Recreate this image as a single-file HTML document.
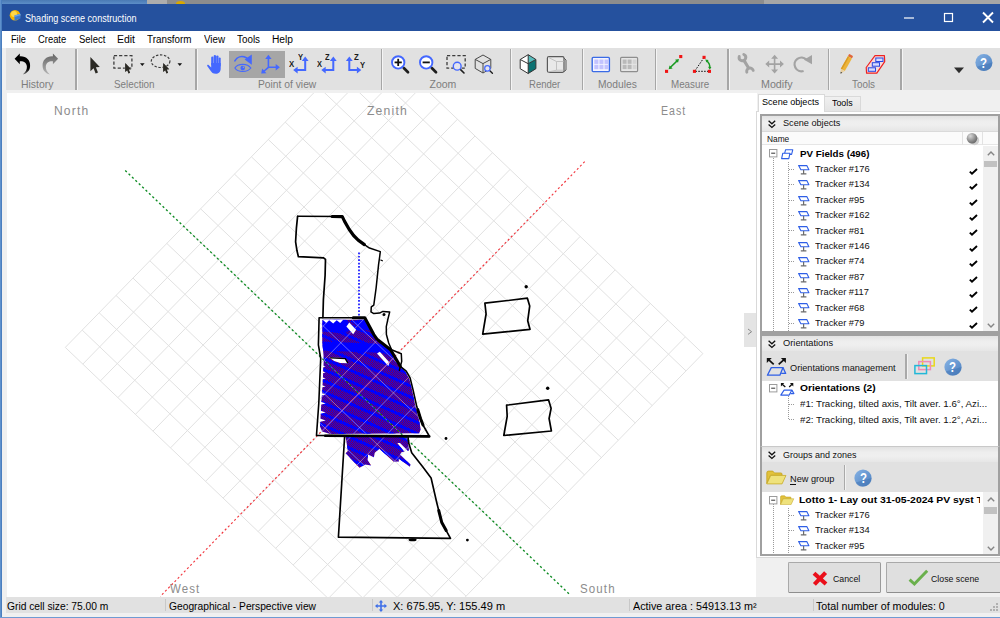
<!DOCTYPE html>
<html>
<head>
<meta charset="utf-8">
<title>Shading scene construction</title>
<style>
*{box-sizing:border-box;margin:0;padding:0}
html,body{width:1000px;height:618px;overflow:hidden;background:#f0f0f0;font-family:"Liberation Sans",sans-serif;}
#root{position:relative;width:1000px;height:618px;overflow:hidden;background:#f0f0f0}
.a{position:absolute}
.t{position:absolute;white-space:nowrap;line-height:1;transform-origin:0 0}
svg{position:absolute;overflow:hidden}
</style>
</head>
<body>
<div id="root">
<div class="a" style="left:0px;top:0px;width:147.4px;height:4px;background:linear-gradient(180deg,#4a7ab4,#5c8ec8);"></div>
<div class="a" style="left:147.4px;top:0px;width:19.6px;height:4px;background:#adadad;"></div>
<div class="a" style="left:167px;top:0px;width:597px;height:4px;background:#8d8d8d;"></div>
<div class="a" style="left:176px;top:0.6px;width:9px;height:5px;background:#d9a800;border-radius:50% 50% 0 0"></div>
<div class="a" style="left:764px;top:0px;width:236px;height:4px;background:#a6a6a6;"></div>
<div class="a" style="left:1px;top:4px;width:999px;height:27px;background:#25519e;"></div>
<svg style="left:9px;top:9px" width="13" height="13" viewBox="0 0 13 13"><circle cx="6" cy="6.3" r="5.3" fill="#f7b500"/><circle cx="5" cy="5" r="3" fill="#ffd84a"/><path d="M5.5 6.5 L11.5 4.8 L11.5 9.5 L5.5 11.8 Z" fill="#3c7bd0"/><path d="M5.5 6.5 L11.5 4.8 L11.5 6.2 L5.5 8 Z" fill="#6aa3e8"/></svg>
<div class="t" style="left:24.50px;top:13.64px;font-size:10px;color:#fff;transform:scaleX(0.9075);">Shading scene construction</div>
<svg style="left:896px;top:4px" width="104" height="27" viewBox="0 0 104 27"><path d="M8 14 H18" stroke="#fff" stroke-width="1.2"/><rect x="48.5" y="9.5" width="8" height="8" fill="none" stroke="#fff" stroke-width="1.2"/><path d="M87 8.5 L97 18.5 M97 8.5 L87 18.5" stroke="#fff" stroke-width="1.9"/></svg>
<div class="a" style="left:2px;top:31px;width:998px;height:17px;background:#fff;"></div>
<div class="t" style="left:10.80px;top:34.83px;font-size:10px;color:#000;transform:scaleX(0.9185);">File</div>
<div class="t" style="left:38.20px;top:34.83px;font-size:10px;color:#000;transform:scaleX(0.9395);">Create</div>
<div class="t" style="left:78.60px;top:34.83px;font-size:10px;color:#000;transform:scaleX(0.9499);">Select</div>
<div class="t" style="left:117.00px;top:34.83px;font-size:10px;color:#000;transform:scaleX(1.0446);">Edit</div>
<div class="t" style="left:146.50px;top:34.83px;font-size:10px;color:#000;transform:scaleX(0.9847);">Transform</div>
<div class="t" style="left:203.50px;top:34.83px;font-size:10px;color:#000;transform:scaleX(0.9770);">View</div>
<div class="t" style="left:236.50px;top:34.83px;font-size:10px;color:#000;transform:scaleX(0.9852);">Tools</div>
<div class="t" style="left:271.50px;top:34.83px;font-size:10px;color:#000;transform:scaleX(1.0210);">Help</div>
<div class="a" style="left:6px;top:48px;width:994px;height:42.4px;background:#e1e1e1;"></div>
<div class="a" style="left:1.8px;top:48px;width:4.3px;height:570px;background:#f0f0f0;"></div>
<div class="a" style="left:6px;top:597px;width:994px;height:16px;background:#e1e1e1;"></div>
<div class="t" style="left:7.20px;top:601.53px;font-size:10px;color:#000;transform:scaleX(1.0250);">Grid cell size: 75.00 m</div>
<div class="t" style="left:168.50px;top:601.53px;font-size:10px;color:#000;transform:scaleX(1.0251);">Geographical - Perspective view</div>
<div class="t" style="left:392.80px;top:601.53px;font-size:10px;color:#000;transform:scaleX(1.1038);">X: 675.95, Y: 155.49 m</div>
<div class="t" style="left:632.50px;top:601.53px;font-size:10px;color:#000;transform:scaleX(1.0785);">Active area : 54913.13 m²</div>
<div class="t" style="left:816.00px;top:601.53px;font-size:10px;color:#000;transform:scaleX(1.0678);">Total number of modules: 0</div>
<div class="a" style="left:165px;top:599px;width:1px;height:12px;background:#c8c8c8;"></div>
<div class="a" style="left:371.5px;top:599px;width:1px;height:12px;background:#c8c8c8;"></div>
<div class="a" style="left:629px;top:599px;width:1px;height:12px;background:#c8c8c8;"></div>
<div class="a" style="left:812.5px;top:599px;width:1px;height:12px;background:#c8c8c8;"></div>
<svg style="left:375px;top:600px" width="12" height="12" viewBox="0 0 12 12"><path d="M6 0 L8.2 2.6 H6.8 V5.2 H9.4 V3.8 L12 6 L9.4 8.2 V6.8 H6.8 V9.4 H8.2 L6 12 L3.8 9.4 H5.2 V6.8 H2.6 V8.2 L0 6 L2.6 3.8 V5.2 H5.2 V2.6 H3.8 Z" fill="#3f6fe8"/></svg>
<svg style="left:990px;top:603px" width="9" height="9" viewBox="0 0 9 9"><g fill="#b0b0b0"><rect x="6" y="0" width="2" height="2"/><rect x="3" y="3" width="2" height="2"/><rect x="6" y="3" width="2" height="2"/><rect x="0" y="6" width="2" height="2"/><rect x="3" y="6" width="2" height="2"/><rect x="6" y="6" width="2" height="2"/></g></svg>
<div class="a" style="left:6.8px;top:92.5px;width:750.7px;height:504.5px;background:#fff;"></div>
<svg style="left:6.8px;top:92.5px" width="750.7" height="504.5" viewBox="0 0 750.7 504.5">
<path d="M58.3 254.4L362.8 -57.5M75.8 271.1L380.3 -40.8M93.4 287.9L397.9 -24.0M110.9 304.6L415.4 -7.3M128.4 321.4L432.9 9.5M146.0 338.1L450.5 26.2M163.5 354.9L468.0 43.0M181.0 371.6L485.5 59.7M198.6 388.3L503.1 76.4M216.1 405.1L520.6 93.2M233.6 421.8L538.1 109.9M251.1 438.6L555.6 126.7M268.7 455.3L573.2 143.4M286.2 472.0L590.7 160.1M303.7 488.8L608.2 176.9M321.3 505.5L625.8 193.6M338.8 522.3L643.3 210.4M356.3 539.0L660.8 227.1M373.9 555.8L678.4 243.9M391.4 572.5L695.9 260.6M58.3 254.4L391.4 572.5M75.2 237.1L408.3 555.2M92.1 219.7L425.2 537.8M109.0 202.4L442.1 520.5M126.0 185.1L459.1 503.2M142.9 167.8L476.0 485.9M159.8 150.4L492.9 468.5M176.7 133.1L509.8 451.2M193.6 115.8L526.7 433.9M210.5 98.4L543.7 416.6M227.5 81.1L560.6 399.2M244.4 63.8L577.5 381.9M261.3 46.5L594.4 364.6M278.2 29.1L611.3 347.2M295.1 11.8L628.2 329.9M312.1 -5.5L645.2 312.6M329.0 -22.8L662.1 295.3M345.9 -40.2L679.0 277.9M362.8 -57.5L695.9 260.6" stroke="#e1e1e1" stroke-width="1" fill="none"/>
<path d="M118.2 77.5L563.4 502.1" stroke="#0f8c24" stroke-width="1.35" stroke-dasharray="2.2 2.5" fill="none"/>
<path d="M577.7 68.7L153.2 503.5" stroke="#f2363e" stroke-width="1.15" stroke-dasharray="2.1 2.4" fill="none"/>
<path d="M352.0 159.5V299.5" stroke="#1414ff" stroke-width="1.7" stroke-dasharray="1.7 1.7" fill="none"/>
<defs><pattern id="hp" width="2" height="2" patternUnits="userSpaceOnUse" patternTransform="translate(0.00 0.00)"><rect width="2" height="2" fill="#0000ff"/><rect x="0" y="0" width="1" height="1" fill="#880040" shape-rendering="crispEdges"/><rect x="1" y="1" width="1" height="1" fill="#880040" shape-rendering="crispEdges"/></pattern><pattern id="bp" width="40" height="10.2" patternUnits="userSpaceOnUse" patternTransform="rotate(24)"><rect y="0" width="40" height="2.9" fill="#0000ff"/></pattern><clipPath id="hc"><polygon points="315.5,226.8 358.0,226.8 361.7,234.5 370.2,247.0 383.2,258.0 392.7,273.5 398.2,278.5 402.2,285.5 405.2,297.5 408.7,314.5 412.2,327.5 413.7,336.5 412.2,340.3 323.2,340.9 315.2,338.5 313.0,333.5 314.2,312.5 315.8,287.5 316.8,265.5 315.2,247.5"/><polygon points="338.6,344.0 400.2,344.0 402.0,357.1 401.1,358.0 393.0,349.9 390.3,349.9 397.5,358.9 394.8,358.9 393.0,361.6 403.4,371.5 402.9,373.8 391.2,365.2 392.1,368.4 386.7,368.8 372.3,355.8 367.8,359.8 366.9,364.3 361.1,361.6 360.6,367.0 364.2,372.4 357.9,371.5 355.2,373.3 352.5,374.7 338.6,360.3 340.8,358.0 339.9,351.7"/></clipPath></defs>
<g clip-path="url(#hc)"><rect x="300" y="215" width="130" height="170" fill="url(#hp)"/><rect x="300" y="215" width="130" height="170" fill="url(#bp)"/><polygon points="315.2,248.5 376.2,251.0 385.2,259.5 377.2,260.0 315.2,257.5" fill="#0000ff"/><polygon points="315.2,226.5 339.2,226.5 345.2,234.5 338.2,240.5 315.2,238.5" fill="#0000ff"/><polygon points="343.2,228.0 357.2,227.0 365.2,237.5 355.2,236.5" fill="#0000ff"/></g>
<polygon points="339.4,233.4 342.3,229.4 349.1,236.8 346.2,241.3" fill="#fff"/><polygon points="370.0,260.5 372.8,258.8 382.5,269.6 381.3,273.0" fill="#fff"/><polygon points="322.2,264.5 337.7,265.1 340.8,270.3 333.2,270.1 327.2,268.0" fill="#fff"/><polygon points="315.7,226.8 319.2,230.0 322.2,227.3 326.2,230.5 329.7,227.3 333.2,230.0 336.2,226.8" fill="#fff"/><polygon points="312.2,271.3 318.7,273.5 312.2,275.1" fill="#fff"/><polygon points="312.2,277.3 318.7,279.5 312.2,281.1" fill="#fff"/><polygon points="312.2,283.3 318.7,285.5 312.2,287.1" fill="#fff"/><polygon points="312.2,291.3 318.7,293.5 312.2,295.1" fill="#fff"/><polygon points="312.2,299.3 318.7,301.5 312.2,303.1" fill="#fff"/><polygon points="312.2,308.3 318.7,310.5 312.2,312.1" fill="#fff"/><polygon points="312.2,317.3 318.7,319.5 312.2,321.1" fill="#fff"/><polygon points="312.2,325.3 318.7,327.5 312.2,329.1" fill="#fff"/>
<g clip-path="url(#hc)"><path d="M58.3 254.4L362.8 -57.5M75.8 271.1L380.3 -40.8M93.4 287.9L397.9 -24.0M110.9 304.6L415.4 -7.3M128.4 321.4L432.9 9.5M146.0 338.1L450.5 26.2M163.5 354.9L468.0 43.0M181.0 371.6L485.5 59.7M198.6 388.3L503.1 76.4M216.1 405.1L520.6 93.2M233.6 421.8L538.1 109.9M251.1 438.6L555.6 126.7M268.7 455.3L573.2 143.4M286.2 472.0L590.7 160.1M303.7 488.8L608.2 176.9M321.3 505.5L625.8 193.6M338.8 522.3L643.3 210.4M356.3 539.0L660.8 227.1M373.9 555.8L678.4 243.9M391.4 572.5L695.9 260.6M58.3 254.4L391.4 572.5M75.2 237.1L408.3 555.2M92.1 219.7L425.2 537.8M109.0 202.4L442.1 520.5M126.0 185.1L459.1 503.2M142.9 167.8L476.0 485.9M159.8 150.4L492.9 468.5M176.7 133.1L509.8 451.2M193.6 115.8L526.7 433.9M210.5 98.4L543.7 416.6M227.5 81.1L560.6 399.2M244.4 63.8L577.5 381.9M261.3 46.5L594.4 364.6M278.2 29.1L611.3 347.2M295.1 11.8L628.2 329.9M312.1 -5.5L645.2 312.6M329.0 -22.8L662.1 295.3M345.9 -40.2L679.0 277.9M362.8 -57.5L695.9 260.6" stroke="#c9c4ff" stroke-width="0.7" opacity="0.7" fill="none"/><path d="M577.7 68.7L153.2 503.5" stroke="#e05aa0" stroke-width="0.8" opacity="0.75" fill="none"/><path d="M118.2 77.5L563.4 502.1" stroke="#0b6a2a" stroke-width="1.3" stroke-dasharray="2.2 2.5" fill="none"/></g>
<polyline points="290.6,123.3 335.3,123.6 337.6,128.4 342.1,136.3 346.6,142.5 351.2,147.1 357.4,151.6 362.5,155.0 373.3,158.6 372.7,163.5 371.6,171.4 369.1,195.2 366.8,212.2 364.3,213.9 364.0,218.9 366.8,220.6 372.5,220.1 375.9,218.4 382.7,218.9 381.0,225.7 379.3,233.7 379.4,241.5 381.7,250.0 384.6,256.8 394.3,260.7 394.7,268.4 392.4,277.2" stroke="#000" fill="none" stroke-linejoin="round" stroke-linecap="round" stroke-width="1.5"/><polyline points="290.6,123.3 289.4,135.2 288.6,148.8 290.0,157.8 291.4,163.7 316.6,164.8 318.5,166.3 318.1,182.5 316.4,206.5 315.9,224.6" stroke="#000" fill="none" stroke-linejoin="round" stroke-linecap="round" stroke-width="1.7"/><polyline points="325.2,123.5 335.3,123.6 337.6,128.4 342.1,136.3 346.6,142.5 351.2,147.1 357.4,151.6" stroke="#000" fill="none" stroke-linejoin="round" stroke-linecap="round" stroke-width="3.2"/><circle cx="377.0" cy="221.5" r="1.5" fill="#000"/><path d="M373.8 167.0l1.6 0.8" stroke="#000" fill="none" stroke-linejoin="round" stroke-linecap="round" stroke-width="1.2"/><polygon points="312.1,224.8 357.8,224.8 366.8,241.6 370.0,246.1 383.6,256.8 393.3,273.3 399.2,278.1 403.1,284.9 406.0,296.6 409.9,314.1 415.7,331.5 422.5,343.5 309.5,342.4 311.8,310.2 313.7,265.5 311.4,251.9 312.1,224.8" stroke="#000" fill="none" stroke-linejoin="round" stroke-linecap="round" stroke-width="1.6"/><polyline points="346.2,224.7 357.8,224.8 366.8,241.6 370.0,246.1 383.6,256.8 393.3,273.3" stroke="#000" fill="none" stroke-linejoin="round" stroke-linecap="round" stroke-width="3.1"/><polyline points="410.7,316.5 413.5,325.5 416.0,332.0" stroke="#000" fill="none" stroke-linejoin="round" stroke-linecap="round" stroke-width="3"/><polyline points="318.2,342.7 422.2,343.4" stroke="#000" fill="none" stroke-linejoin="round" stroke-linecap="round" stroke-width="2.6"/><polyline points="323.6,264.9 338.3,265.6 340.6,269.6" stroke="#000" fill="none" stroke-linejoin="round" stroke-linecap="round" stroke-width="1.4"/><polyline points="337.6,343.8 334.7,390.8 331.4,444.2 443.5,445.4 434.8,429.6 429.9,410.2 424.1,385.0 415.3,373.3 404.7,359.7 401.7,350.0 401.0,343.5" stroke="#000" fill="none" stroke-linejoin="round" stroke-linecap="round" stroke-width="1.65"/><polyline points="431.7,417.5 434.8,429.6 439.2,437.5" stroke="#000" fill="none" stroke-linejoin="round" stroke-linecap="round" stroke-width="3"/><ellipse cx="405.6" cy="446.7" rx="4" ry="1.5" fill="#000"/><polygon points="477.9,210.2 520.4,205.2 522.7,213.1 520.7,227.8 523.0,236.3 475.7,241.2 479.1,221.0" stroke="#000" fill="none" stroke-linejoin="round" stroke-linecap="round" stroke-width="1.7"/><polygon points="499.6,312.2 541.5,306.8 544.1,315.3 542.1,325.5 544.4,338.0 496.8,342.5 500.2,323.3" stroke="#000" fill="none" stroke-linejoin="round" stroke-linecap="round" stroke-width="1.7"/><circle cx="519.2" cy="193.8" r="1.7" fill="#000"/><circle cx="540.7" cy="295.3" r="1.7" fill="#000"/><circle cx="439.0" cy="345.5" r="1.4" fill="#000"/><circle cx="460.4" cy="447.1" r="1.4" fill="#000"/>
</svg>
<div class="t" style="left:54.00px;top:104.52px;font-size:12.5px;color:#8c8c8c;letter-spacing:1.2px;transform:scaleX(0.9653);">North</div>
<div class="t" style="left:366.50px;top:104.52px;font-size:12.5px;color:#8c8c8c;letter-spacing:1.2px;transform:scaleX(0.9752);">Zenith</div>
<div class="t" style="left:660.70px;top:104.52px;font-size:12.5px;color:#8c8c8c;letter-spacing:1.2px;transform:scaleX(0.8486);">East</div>
<div class="t" style="left:169.60px;top:582.82px;font-size:12.5px;color:#8c8c8c;letter-spacing:1.2px;transform:scaleX(0.9199);">West</div>
<div class="t" style="left:580.00px;top:582.82px;font-size:12.5px;color:#8c8c8c;letter-spacing:1.2px;transform:scaleX(0.9233);">South</div>
<div class="a" style="left:744px;top:312.7px;width:12px;height:34.4px;background:#e4e4e4;"></div>
<svg style="left:747px;top:328px" width="6" height="8" viewBox="0 0 6 8"><path d="M1 1 L4.6 3.7 L1 6.4" stroke="#8a8a8a" stroke-width="1" fill="none"/></svg>
<div class="a" style="left:229px;top:50.5px;width:56px;height:27px;background:#a6a6a6;"></div>
<div class="a" style="left:75.3px;top:49px;width:1.3px;height:40.8px;background:#a6a6a6;"></div>
<div class="a" style="left:76.6px;top:49px;width:0.9px;height:40.8px;background:#f4f4f4;"></div>
<div class="a" style="left:195.3px;top:49px;width:1.3px;height:40.8px;background:#a6a6a6;"></div>
<div class="a" style="left:196.6px;top:49px;width:0.9px;height:40.8px;background:#f4f4f4;"></div>
<div class="a" style="left:380.8px;top:49px;width:1.3px;height:40.8px;background:#a6a6a6;"></div>
<div class="a" style="left:382.1px;top:49px;width:0.9px;height:40.8px;background:#f4f4f4;"></div>
<div class="a" style="left:509.8px;top:49px;width:1.3px;height:40.8px;background:#a6a6a6;"></div>
<div class="a" style="left:511.1px;top:49px;width:0.9px;height:40.8px;background:#f4f4f4;"></div>
<div class="a" style="left:581.8px;top:49px;width:1.3px;height:40.8px;background:#a6a6a6;"></div>
<div class="a" style="left:583.1px;top:49px;width:0.9px;height:40.8px;background:#f4f4f4;"></div>
<div class="a" style="left:654.8px;top:49px;width:1.3px;height:40.8px;background:#a6a6a6;"></div>
<div class="a" style="left:656.1px;top:49px;width:0.9px;height:40.8px;background:#f4f4f4;"></div>
<div class="a" style="left:727.3px;top:49px;width:1.3px;height:40.8px;background:#a6a6a6;"></div>
<div class="a" style="left:728.6px;top:49px;width:0.9px;height:40.8px;background:#f4f4f4;"></div>
<div class="a" style="left:827.8px;top:49px;width:1.3px;height:40.8px;background:#a6a6a6;"></div>
<div class="a" style="left:829.1px;top:49px;width:0.9px;height:40.8px;background:#f4f4f4;"></div>
<div class="a" style="left:900.3px;top:49px;width:1.3px;height:40.8px;background:#a6a6a6;"></div>
<div class="a" style="left:901.6px;top:49px;width:0.9px;height:40.8px;background:#f4f4f4;"></div>
<div class="t" style="left:21.40px;top:79.41px;font-size:10.5px;color:#7d7d7d;transform:scaleX(0.9917);">History</div>
<div class="t" style="left:113.70px;top:79.41px;font-size:10.5px;color:#7d7d7d;transform:scaleX(0.9399);">Selection</div>
<div class="t" style="left:257.50px;top:79.41px;font-size:10.5px;color:#7d7d7d;transform:scaleX(0.9793);">Point of view</div>
<div class="t" style="left:429.50px;top:79.41px;font-size:10.5px;color:#7d7d7d;">Zoom</div>
<div class="t" style="left:528.70px;top:79.41px;font-size:10.5px;color:#7d7d7d;transform:scaleX(0.9088);">Render</div>
<div class="t" style="left:597.50px;top:79.41px;font-size:10.5px;color:#7d7d7d;transform:scaleX(0.9776);">Modules</div>
<div class="t" style="left:670.70px;top:79.41px;font-size:10.5px;color:#7d7d7d;transform:scaleX(0.9326);">Measure</div>
<div class="t" style="left:760.50px;top:79.41px;font-size:10.5px;color:#7d7d7d;transform:scaleX(1.0185);">Modify</div>
<div class="t" style="left:852.00px;top:79.41px;font-size:10.5px;color:#7d7d7d;transform:scaleX(0.9383);">Tools</div>
<svg style="left:0px;top:48px" width="1000" height="43" viewBox="0 48 1000 43">
<defs><linearGradient id="rg" x1="0" y1="0" x2="0" y2="1"><stop offset="0" stop-color="#636363"/><stop offset="1" stop-color="#b4b4b4"/></linearGradient><linearGradient id="ug" x1="0" y1="0" x2="0" y2="1"><stop offset="0.75" stop-color="#000"/><stop offset="1" stop-color="#777"/></linearGradient><linearGradient id="hg" x1="0" y1="0" x2="1" y2="1"><stop offset="0" stop-color="#86b2e4"/><stop offset="1" stop-color="#4c80c0"/></linearGradient></defs>
<path d="M14.6 58.8 L19.8 53.5 L19.8 56.4 C26 56 30.4 60 30.1 66 C29.9 70.6 27 73.6 22.8 74.4 C25.8 72 27 69.5 26.9 66.5 C26.6 62.6 23.6 61 19.8 61.3 L19.8 64.2 Z" fill="url(#ug)"/>
<g transform="translate(72.7 0) scale(-1 1)"><path d="M14.6 58.8 L19.8 53.5 L19.8 56.4 C26 56 30.4 60 30.1 66 C29.9 70.6 27 73.6 22.8 74.4 C25.8 72 27 69.5 26.9 66.5 C26.6 62.6 23.6 61 19.8 61.3 L19.8 64.2 Z" fill="url(#rg)"/></g>
<path transform="translate(90.4 56.9)" d="M0 0 L0 14.3 L3.2 11.3 L5.2 16.5 L7.6 15.5 L5.5 10.4 L9.4 10.1 Z" fill="#2b2a25"/>
<rect x="113.9" y="55.6" width="18" height="12.6" fill="none" stroke="#3c3c3c" stroke-width="1.3" stroke-dasharray="3.2 2"/><path transform="translate(125.2 62.9) scale(0.64)" d="M0 0 L0 14.3 L3.2 11.3 L5.2 16.5 L7.6 15.5 L5.5 10.4 L9.4 10.1 Z" fill="#2b2a25" stroke="#e1e1e1" stroke-width="0.8"/><path transform="translate(125.2 62.9) scale(0.64)" d="M0 0 L0 14.3 L3.2 11.3 L5.2 16.5 L7.6 15.5 L5.5 10.4 L9.4 10.1 Z" fill="#2b2a25"/><path d="M140 63.3 h4.6 l-2.3 2.6 Z" fill="#111"/>
<ellipse cx="160.6" cy="61.2" rx="9.3" ry="6.3" fill="none" stroke="#3c3c3c" stroke-width="1.2" stroke-dasharray="2.4 1.6"/><path transform="translate(163.2 62.9) scale(0.64)" d="M0 0 L0 14.3 L3.2 11.3 L5.2 16.5 L7.6 15.5 L5.5 10.4 L9.4 10.1 Z" fill="#2b2a25" stroke="#e1e1e1" stroke-width="0.8"/><path transform="translate(163.2 62.9) scale(0.64)" d="M0 0 L0 14.3 L3.2 11.3 L5.2 16.5 L7.6 15.5 L5.5 10.4 L9.4 10.1 Z" fill="#2b2a25"/><path d="M177.5 63.3 h4.6 l-2.3 2.6 Z" fill="#111"/>
<g fill="#4468ff"><rect x="211.2" y="56.6" width="2.3" height="9" rx="1.1"/><rect x="213.7" y="55" width="2.3" height="10" rx="1.1"/><rect x="216.2" y="55.4" width="2.3" height="10" rx="1.1"/><rect x="218.6" y="57.6" width="2.1" height="9" rx="1"/><path d="M211.2 63 H220.7 V68.5 C220.7 72 218.5 73.8 215.8 73.8 C213 73.8 211.6 72.5 210.4 70.5 L207.2 66 C206.8 65.2 207.8 64.4 208.6 65 L211.2 67.4 Z"/></g>
<path d="M234.9 60.8 C237 57 241.5 55.3 246.8 58" fill="none" stroke="#4468ff" stroke-width="1.7" stroke-linecap="round"/><path d="M251.8 54.6 L251.8 64.8 L244.6 59.4 Z" fill="#4468ff"/><path d="M234.9 68 C238 63.2 247.5 63.2 250.8 68 C247.5 72.6 238 72.6 234.9 68 Z" fill="none" stroke="#4468ff" stroke-width="1.2"/><circle cx="242.7" cy="68" r="2.3" fill="#4468ff"/><circle cx="243.4" cy="67.3" r="0.7" fill="#a6a6a6"/>
<g stroke="#4468ff" stroke-width="1.6" fill="none"><path d="M268.4 67.3 V58 M268.4 67.3 H276.5 M268.4 67.3 L263.6 71.5"/></g><g fill="#4468ff"><path d="M268.4 54.8 L271.6 59 H265.2 Z"/><path d="M279.9 67.3 L275.7 70.5 V64.1 Z"/><path d="M261.2 73.6 L262.2 68.6 L266.4 73.2 Z"/></g>
<path d="M305.2 60 V70.1 H296.2" fill="none" stroke="#4468ff" stroke-width="2"/><path d="M305.2 56.6 L308.59999999999997 61 H301.8 Z" fill="#4468ff"/><path d="M293.2 70.1 L297.59999999999997 73.5 V66.7 Z" fill="#4468ff"/><path d="M333.3 60 V70.1 H324.3" fill="none" stroke="#4468ff" stroke-width="2"/><path d="M333.3 56.6 L336.7 61 H329.90000000000003 Z" fill="#4468ff"/><path d="M321.3 70.1 L325.7 73.5 V66.7 Z" fill="#4468ff"/><path d="M349.3 60 V70.1 H358.3" fill="none" stroke="#4468ff" stroke-width="2"/><path d="M349.3 56.6 L352.7 61 H345.90000000000003 Z" fill="#4468ff"/><path d="M361.3 70.1 L356.90000000000003 73.5 V66.7 Z" fill="#4468ff"/>
</svg>
<div class="t" style="left:297.50px;top:53.19px;font-size:8.4px;color:#1a1a1a;font-weight:bold;transform:scaleX(0.9102);">Y</div>
<div class="t" style="left:289.20px;top:60.39px;font-size:8.4px;color:#1a1a1a;font-weight:bold;transform:scaleX(0.9281);">X</div>
<div class="t" style="left:325.00px;top:53.19px;font-size:8.4px;color:#1a1a1a;font-weight:bold;transform:scaleX(0.8965);">Z</div>
<div class="t" style="left:317.40px;top:60.39px;font-size:8.4px;color:#1a1a1a;font-weight:bold;transform:scaleX(0.8924);">X</div>
<div class="t" style="left:354.00px;top:53.19px;font-size:8.4px;color:#1a1a1a;font-weight:bold;transform:scaleX(0.9355);">Z</div>
<div class="t" style="left:360.00px;top:61.09px;font-size:8.4px;color:#1a1a1a;font-weight:bold;transform:scaleX(0.9102);">Y</div>
<svg style="left:0px;top:48px" width="1000" height="43" viewBox="0 48 1000 43">
<path d="M403.8 68 L408.0 72.2" stroke="#1e1e1e" stroke-width="2.7" stroke-linecap="round"/><circle cx="398.2" cy="62.4" r="6.2" fill="#fff" stroke="#4468ff" stroke-width="1.9"/><path d="M394.59999999999997 62.4 H401.8" stroke="#111" stroke-width="1.8"/><path d="M398.2 58.8 V66" stroke="#111" stroke-width="1.8"/><path d="M431.8 68 L436.0 72.2" stroke="#1e1e1e" stroke-width="2.7" stroke-linecap="round"/><circle cx="426.2" cy="62.4" r="6.2" fill="#fff" stroke="#4468ff" stroke-width="1.9"/><path d="M422.59999999999997 62.4 H429.8" stroke="#111" stroke-width="1.8"/>
<rect x="447" y="55.6" width="18.2" height="12.6" fill="none" stroke="#3c3c3c" stroke-width="1.3" stroke-dasharray="3.2 2"/><path d="M460.6 69.6 L464 73" stroke="#1e1e1e" stroke-width="1.6" stroke-linecap="round"/><circle cx="457.2" cy="66.2" r="3.9" fill="#e4e4ee" stroke="#4468ff" stroke-width="1.4"/>
<g fill="none" stroke="#4a4a4a" stroke-width="1"><path d="M483 55 L490.8 59.4 V68.4 L483 73 L475.2 68.4 V59.4 Z"/><path d="M475.2 59.4 L483 63.6 L490.8 59.4 M483 63.6 V73"/></g><path d="M489.6 70.6 L492.4 73.2" stroke="#1e1e1e" stroke-width="1.4" stroke-linecap="round"/><circle cx="487.4" cy="68.4" r="2.7" fill="#e4e4ee" stroke="#4468ff" stroke-width="1.2"/>
<path d="M528.2 54.7 L535.9 59.5 V68.7 L528.2 73.5 L520.2 68.7 V59.5 Z" fill="#fff"/><path d="M528.2 54.7 L535.9 59.5 L528.2 63.7 Z" fill="#57bdbd"/><path d="M528.2 63.7 L535.9 59.5 V68.7 L528.2 73.5 Z" fill="#0b7272"/><g fill="none" stroke="#333" stroke-width="1"><path d="M528.2 54.7 L535.9 59.5 V68.7 L528.2 73.5 L520.2 68.7 V59.5 Z"/><path d="M520.2 59.5 L528.2 63.7 L535.9 59.5 M528.2 63.7 V73.5 M528.2 54.7 V63.7"/></g>
<rect x="547.4" y="56.7" width="16.6" height="15.6" rx="1.5" fill="#e9e9e9" stroke="#5a5a5a" stroke-width="1.2"/><path d="M564 58 L566 60 V70 L564 71.6" fill="none" stroke="#5a5a5a" stroke-width="1"/><path d="M548 57.2 L556.5 61.5 H563.5 M556.5 61.5 V70.2 L548 72 M556.5 70.2 H563.5" fill="none" stroke="#bdbdbd" stroke-width="0.9"/>
<rect x="592.2" y="57.4" width="17.2" height="14.2" rx="1" fill="#f4f4ff" stroke="#3a6be6" stroke-width="1.4"/><rect x="594.3" y="59.5" width="4.1" height="4.4" fill="#c3c3ff"/><rect x="594.3" y="64.8" width="4.1" height="4.4" fill="#c3c3ff"/><rect x="599.4" y="59.5" width="4.1" height="4.4" fill="#c3c3ff"/><rect x="599.4" y="64.8" width="4.1" height="4.4" fill="#c3c3ff"/><rect x="604.5" y="59.5" width="4.1" height="4.4" fill="#c3c3ff"/><rect x="604.5" y="64.8" width="4.1" height="4.4" fill="#c3c3ff"/>
<rect x="620.6" y="57.4" width="17" height="14.2" rx="1" fill="#e6e6e6" stroke="#8e8e8e" stroke-width="1.2"/><rect x="622.6" y="59.5" width="4.0" height="4.3" fill="#b9b9b9"/><rect x="622.6" y="64.8" width="4.0" height="4.3" fill="#b9b9b9"/><rect x="627.6" y="59.5" width="4.0" height="4.3" fill="#b9b9b9"/><rect x="627.6" y="64.8" width="4.0" height="4.3" fill="#b9b9b9"/><rect x="632.6" y="59.5" width="4.0" height="4.3" fill="#d4d4d4"/><rect x="632.6" y="64.8" width="4.0" height="4.3" fill="#d4d4d4"/>
<path d="M670 67.8 L677.6 60.4" stroke="#1a9a22" stroke-width="1.5"/><path d="M668.6 69.2 L669.6 65.4 L672.6 68.4 Z M679 59 L678 62.8 L675 59.8 Z" fill="#1a9a22"/><rect x="665" y="69.8" width="3.1" height="3.1" fill="#f01414"/><rect x="679.2" y="55" width="3.1" height="3.1" fill="#f01414"/>
<path d="M704 57.6 L694.6 71.3 H709.4" fill="none" stroke="#111" stroke-width="1" stroke-dasharray="1.6 1.3"/><path d="M706.6 60.6 C709 62.5 710 65 709.8 68" fill="none" stroke="#1a9a22" stroke-width="1.4"/><path d="M705.2 59.4 L708.6 60 L706.6 62.6 Z M709.8 69.8 L708 66.8 L711.4 67 Z" fill="#1a9a22"/><rect x="702.5" y="55.8" width="3.1" height="3.1" fill="#f01414"/><rect x="692.9" y="69.8" width="3.1" height="3.1" fill="#f01414"/><rect x="707.9" y="69.8" width="3.1" height="3.1" fill="#f01414"/>
<path d="M744 60.4 L748.6 68" stroke="#a3a3a3" stroke-width="3.1" stroke-linecap="round"/><path d="M739.5 56 A3.3 3.3 0 1 0 744.3 54.6" fill="none" stroke="#a3a3a3" stroke-width="2.9" stroke-linecap="round" transform="rotate(-8 743 58)"/><path d="M753.2 70.4 A3.3 3.3 0 1 0 746.8 72.2" fill="none" stroke="#a3a3a3" stroke-width="2.9" stroke-linecap="round"/>
<path transform="translate(774.6 64.1)" d="M0 -9.3 L3.5 -5.4 H0.8 V-0.8 H5.4 V-3.5 L9.3 0 L5.4 3.5 V0.8 H0.8 V5.4 H3.5 L0 9.3 L-3.5 5.4 H-0.8 V0.8 H-5.4 V3.5 L-9.3 0 L-5.4 -3.5 V-0.8 H-0.8 V-5.4 H-3.5 Z" fill="#a3a3a3"/>
<path d="M806.3 59.5 A6.9 6.9 0 1 0 803.6 71" fill="none" stroke="#a3a3a3" stroke-width="2.3"/><path d="M812 55 V64.2 L804 59.8 Z" fill="#a3a3a3"/>
<g transform="translate(851.2 55) rotate(29.5)"><rect x="-2.3" y="0" width="4.6" height="2.6" rx="0.8" fill="#e0663a"/><rect x="-2.3" y="2.6" width="4.6" height="14.4" fill="#ecb43a"/><rect x="-2.3" y="2.6" width="1.5" height="14.4" fill="#d99a22"/><path d="M-2.3 17 L0 21.6 L2.3 17 Z" fill="#e8cfa0"/><path d="M-0.9 19.8 L0 21.6 L0.9 19.8 Z" fill="#333"/></g>
<path d="M875 55.6 H884.4 L884.7 61.6 L876.8 73.2 H866.6 L866.2 67.5 Z" fill="#f6dada" stroke="#ee2222" stroke-width="1.2" stroke-linejoin="round"/><rect x="875.8" y="58" width="7.2" height="3.5" fill="#d6dcff" stroke="#2846e0" stroke-width="1"/><rect x="872.3" y="62.7" width="7.2" height="3.5" fill="#d6dcff" stroke="#2846e0" stroke-width="1"/><rect x="868.3" y="67.8" width="7.2" height="3.5" fill="#d6dcff" stroke="#2846e0" stroke-width="1"/>
<path d="M954 67.6 H964 L959 73.2 Z" fill="#2e2e2e"/><circle cx="983.9" cy="62.5" r="8.5" fill="url(#hg)"/><path d="M976.6 66.8 A8.5 8.5 0 0 0 992.4 62.4 Z" fill="#3f70b2" opacity="0.45"/>
</svg>
<div class="t" style="left:980.40px;top:55.75px;font-size:14px;color:#fff;font-weight:bold;transform:scaleX(0.8185);">?</div>
<div class="a" style="left:757px;top:92.5px;width:243px;height:18.5px;background:#f0f0f0;"></div>
<div class="a" style="left:756px;top:110.5px;width:244px;height:447.5px;background:#fff;border:1px solid #d9d9d9;border-right:none"></div>
<div class="a" style="left:756px;top:558px;width:244px;height:39px;background:#f0f0f0;"></div>
<div class="a" style="left:825px;top:95.5px;width:36px;height:15.5px;background:linear-gradient(180deg,#f0f0f0,#e4e4e4);border:1px solid #d9d9d9;border-left:none;border-bottom:none"></div>
<div class="a" style="left:757.5px;top:93.5px;width:67.5px;height:18px;background:#fff;border:1px solid #d9d9d9;border-bottom:none"></div>
<div class="t" style="left:762.00px;top:97.98px;font-size:9.0px;color:#000;transform:scaleX(1.0082);">Scene objects</div>
<div class="t" style="left:832.00px;top:98.58px;font-size:9.0px;color:#000;transform:scaleX(0.9852);">Tools</div>
<div class="a" style="left:759.5px;top:113.8px;width:240.5px;height:219.6px;background:#fff;border:2px solid #a0a0a0"></div>
<div class="a" style="left:761.5px;top:115.8px;width:236.5px;height:15.4px;background:linear-gradient(180deg,#e2e2e2 0%,#eeeeee 35%,#efefef 60%,#e6e6e6 100%);"></div>
<svg style="left:767.8px;top:119.6px" width="8" height="9" viewBox="0 0 8 9"><path d="M0.6 0.8 L3.9 3.8 L7.2 0.8 M0.6 4.4 L3.9 7.4 L7.2 4.4" fill="none" stroke="#111" stroke-width="1.3"/></svg>
<div class="t" style="left:782.60px;top:118.26px;font-size:9.5px;color:#111;transform:scaleX(0.9618);">Scene objects</div>
<div class="a" style="left:761.5px;top:131.2px;width:236.5px;height:14.2px;background:#fbfbfb;border-top:1px solid #dadada;border-bottom:1px solid #e6e6e6"></div>
<div class="a" style="left:961.7px;top:132px;width:1px;height:13px;background:#e2e2e2;"></div>
<div class="a" style="left:982.4px;top:132px;width:1px;height:13px;background:#e2e2e2;"></div>
<div class="t" style="left:766.80px;top:135.14px;font-size:8.7px;color:#111;transform:scaleX(0.9609);">Name</div>
<svg style="left:965px;top:132px" width="16" height="14" viewBox="0 0 16 14"><defs><radialGradient id="sg" cx="0.35" cy="0.3" r="0.8"><stop offset="0" stop-color="#d8d8d8"/><stop offset="0.6" stop-color="#8c8c8c"/><stop offset="1" stop-color="#5e5e5e"/></radialGradient></defs><circle cx="9.6" cy="8.6" r="4.6" fill="#cfcfcf"/><circle cx="7" cy="6.2" r="5.3" fill="url(#sg)"/></svg>
<svg style="left:769.2px;top:149.2px" width="9" height="9" viewBox="0 0 9 9"><rect x="0.5" y="0.5" width="7.4" height="7.4" fill="#fff" stroke="#9b9b9b" stroke-width="1"/><path d="M2.2 4.2 H6.2" stroke="#333" stroke-width="1"/></svg>
<svg style="left:781px;top:148.6px" width="13" height="11" viewBox="0 0 13 11"><g fill="#fff" stroke="#2f5fe6" stroke-width="1.1" stroke-linejoin="round"><path d="M4.6 0.7 H11.8 L10.6 5.4 H3.4 Z"/><path d="M1.8 4.2 H9 L7.8 9.6 H0.6 Z"/></g></svg>
<div class="t" style="left:799.80px;top:149.97px;font-size:8.9px;color:#000;font-weight:bold;transform:scaleX(1.0993);">PV Fields (496)</div>
<div class="a" style="left:773px;top:158px;width:1px;height:173.39999999999998px;background:repeating-linear-gradient(180deg,#9a9a9a 0 1px,transparent 1px 2px)"></div>
<div class="a" style="left:788px;top:162px;width:1px;height:169.39999999999998px;background:repeating-linear-gradient(180deg,#9a9a9a 0 1px,transparent 1px 2px)"></div>
<div class="a" style="left:789px;top:169px;width:6px;height:1px;background:repeating-linear-gradient(90deg,#9a9a9a 0 1px,transparent 1px 2px)"></div>
<svg style="left:797.7px;top:164.70000000000002px" width="12" height="10" viewBox="0 0 12 10"><path d="M0.6 0.6 H8.8 L10.9 4.8 H2.9 Z" fill="#fff" stroke="#2f5fe6" stroke-width="1.1" stroke-linejoin="round"/><path d="M5.6 5 V8.6 M2.8 8.9 H8.4" stroke="#6b6b6b" stroke-width="1.2" fill="none"/></svg>
<div class="t" style="left:814.90px;top:164.98px;font-size:9px;color:#111;transform:scaleX(1.0362);">Tracker #176</div>
<svg style="left:969.3px;top:167.70000000000002px" width="9" height="7" viewBox="0 0 9 7"><path d="M0.8 3.6 L3 5.7 L8 1" fill="none" stroke="#000" stroke-width="1.9" stroke-linejoin="miter"/></svg>
<div class="a" style="left:789px;top:184px;width:6px;height:1px;background:repeating-linear-gradient(90deg,#9a9a9a 0 1px,transparent 1px 2px)"></div>
<svg style="left:797.7px;top:180.10000000000002px" width="12" height="10" viewBox="0 0 12 10"><path d="M0.6 0.6 H8.8 L10.9 4.8 H2.9 Z" fill="#fff" stroke="#2f5fe6" stroke-width="1.1" stroke-linejoin="round"/><path d="M5.6 5 V8.6 M2.8 8.9 H8.4" stroke="#6b6b6b" stroke-width="1.2" fill="none"/></svg>
<div class="t" style="left:814.90px;top:180.38px;font-size:9px;color:#111;transform:scaleX(1.0362);">Tracker #134</div>
<svg style="left:969.3px;top:183.10000000000002px" width="9" height="7" viewBox="0 0 9 7"><path d="M0.8 3.6 L3 5.7 L8 1" fill="none" stroke="#000" stroke-width="1.9" stroke-linejoin="miter"/></svg>
<div class="a" style="left:789px;top:200px;width:6px;height:1px;background:repeating-linear-gradient(90deg,#9a9a9a 0 1px,transparent 1px 2px)"></div>
<svg style="left:797.7px;top:195.50000000000003px" width="12" height="10" viewBox="0 0 12 10"><path d="M0.6 0.6 H8.8 L10.9 4.8 H2.9 Z" fill="#fff" stroke="#2f5fe6" stroke-width="1.1" stroke-linejoin="round"/><path d="M5.6 5 V8.6 M2.8 8.9 H8.4" stroke="#6b6b6b" stroke-width="1.2" fill="none"/></svg>
<div class="t" style="left:814.90px;top:195.78px;font-size:9px;color:#111;transform:scaleX(1.0362);">Tracker #95</div>
<svg style="left:969.3px;top:198.50000000000003px" width="9" height="7" viewBox="0 0 9 7"><path d="M0.8 3.6 L3 5.7 L8 1" fill="none" stroke="#000" stroke-width="1.9" stroke-linejoin="miter"/></svg>
<div class="a" style="left:789px;top:215px;width:6px;height:1px;background:repeating-linear-gradient(90deg,#9a9a9a 0 1px,transparent 1px 2px)"></div>
<svg style="left:797.7px;top:210.9px" width="12" height="10" viewBox="0 0 12 10"><path d="M0.6 0.6 H8.8 L10.9 4.8 H2.9 Z" fill="#fff" stroke="#2f5fe6" stroke-width="1.1" stroke-linejoin="round"/><path d="M5.6 5 V8.6 M2.8 8.9 H8.4" stroke="#6b6b6b" stroke-width="1.2" fill="none"/></svg>
<div class="t" style="left:814.90px;top:211.18px;font-size:9px;color:#111;transform:scaleX(1.0362);">Tracker #162</div>
<svg style="left:969.3px;top:213.9px" width="9" height="7" viewBox="0 0 9 7"><path d="M0.8 3.6 L3 5.7 L8 1" fill="none" stroke="#000" stroke-width="1.9" stroke-linejoin="miter"/></svg>
<div class="a" style="left:789px;top:230px;width:6px;height:1px;background:repeating-linear-gradient(90deg,#9a9a9a 0 1px,transparent 1px 2px)"></div>
<svg style="left:797.7px;top:226.3px" width="12" height="10" viewBox="0 0 12 10"><path d="M0.6 0.6 H8.8 L10.9 4.8 H2.9 Z" fill="#fff" stroke="#2f5fe6" stroke-width="1.1" stroke-linejoin="round"/><path d="M5.6 5 V8.6 M2.8 8.9 H8.4" stroke="#6b6b6b" stroke-width="1.2" fill="none"/></svg>
<div class="t" style="left:814.90px;top:226.58px;font-size:9px;color:#111;transform:scaleX(1.0362);">Tracker #81</div>
<svg style="left:969.3px;top:229.3px" width="9" height="7" viewBox="0 0 9 7"><path d="M0.8 3.6 L3 5.7 L8 1" fill="none" stroke="#000" stroke-width="1.9" stroke-linejoin="miter"/></svg>
<div class="a" style="left:789px;top:246px;width:6px;height:1px;background:repeating-linear-gradient(90deg,#9a9a9a 0 1px,transparent 1px 2px)"></div>
<svg style="left:797.7px;top:241.70000000000002px" width="12" height="10" viewBox="0 0 12 10"><path d="M0.6 0.6 H8.8 L10.9 4.8 H2.9 Z" fill="#fff" stroke="#2f5fe6" stroke-width="1.1" stroke-linejoin="round"/><path d="M5.6 5 V8.6 M2.8 8.9 H8.4" stroke="#6b6b6b" stroke-width="1.2" fill="none"/></svg>
<div class="t" style="left:814.90px;top:241.98px;font-size:9px;color:#111;transform:scaleX(1.0362);">Tracker #146</div>
<svg style="left:969.3px;top:244.70000000000002px" width="9" height="7" viewBox="0 0 9 7"><path d="M0.8 3.6 L3 5.7 L8 1" fill="none" stroke="#000" stroke-width="1.9" stroke-linejoin="miter"/></svg>
<div class="a" style="left:789px;top:261px;width:6px;height:1px;background:repeating-linear-gradient(90deg,#9a9a9a 0 1px,transparent 1px 2px)"></div>
<svg style="left:797.7px;top:257.09999999999997px" width="12" height="10" viewBox="0 0 12 10"><path d="M0.6 0.6 H8.8 L10.9 4.8 H2.9 Z" fill="#fff" stroke="#2f5fe6" stroke-width="1.1" stroke-linejoin="round"/><path d="M5.6 5 V8.6 M2.8 8.9 H8.4" stroke="#6b6b6b" stroke-width="1.2" fill="none"/></svg>
<div class="t" style="left:814.90px;top:257.38px;font-size:9px;color:#111;transform:scaleX(1.0362);">Tracker #74</div>
<svg style="left:969.3px;top:260.09999999999997px" width="9" height="7" viewBox="0 0 9 7"><path d="M0.8 3.6 L3 5.7 L8 1" fill="none" stroke="#000" stroke-width="1.9" stroke-linejoin="miter"/></svg>
<div class="a" style="left:789px;top:277px;width:6px;height:1px;background:repeating-linear-gradient(90deg,#9a9a9a 0 1px,transparent 1px 2px)"></div>
<svg style="left:797.7px;top:272.5px" width="12" height="10" viewBox="0 0 12 10"><path d="M0.6 0.6 H8.8 L10.9 4.8 H2.9 Z" fill="#fff" stroke="#2f5fe6" stroke-width="1.1" stroke-linejoin="round"/><path d="M5.6 5 V8.6 M2.8 8.9 H8.4" stroke="#6b6b6b" stroke-width="1.2" fill="none"/></svg>
<div class="t" style="left:814.90px;top:272.78px;font-size:9px;color:#111;transform:scaleX(1.0362);">Tracker #87</div>
<svg style="left:969.3px;top:275.5px" width="9" height="7" viewBox="0 0 9 7"><path d="M0.8 3.6 L3 5.7 L8 1" fill="none" stroke="#000" stroke-width="1.9" stroke-linejoin="miter"/></svg>
<div class="a" style="left:789px;top:292px;width:6px;height:1px;background:repeating-linear-gradient(90deg,#9a9a9a 0 1px,transparent 1px 2px)"></div>
<svg style="left:797.7px;top:287.9px" width="12" height="10" viewBox="0 0 12 10"><path d="M0.6 0.6 H8.8 L10.9 4.8 H2.9 Z" fill="#fff" stroke="#2f5fe6" stroke-width="1.1" stroke-linejoin="round"/><path d="M5.6 5 V8.6 M2.8 8.9 H8.4" stroke="#6b6b6b" stroke-width="1.2" fill="none"/></svg>
<div class="t" style="left:814.90px;top:288.18px;font-size:9px;color:#111;transform:scaleX(1.0362);">Tracker #117</div>
<svg style="left:969.3px;top:290.9px" width="9" height="7" viewBox="0 0 9 7"><path d="M0.8 3.6 L3 5.7 L8 1" fill="none" stroke="#000" stroke-width="1.9" stroke-linejoin="miter"/></svg>
<div class="a" style="left:789px;top:307px;width:6px;height:1px;background:repeating-linear-gradient(90deg,#9a9a9a 0 1px,transparent 1px 2px)"></div>
<svg style="left:797.7px;top:303.29999999999995px" width="12" height="10" viewBox="0 0 12 10"><path d="M0.6 0.6 H8.8 L10.9 4.8 H2.9 Z" fill="#fff" stroke="#2f5fe6" stroke-width="1.1" stroke-linejoin="round"/><path d="M5.6 5 V8.6 M2.8 8.9 H8.4" stroke="#6b6b6b" stroke-width="1.2" fill="none"/></svg>
<div class="t" style="left:814.90px;top:303.58px;font-size:9px;color:#111;transform:scaleX(1.0362);">Tracker #68</div>
<svg style="left:969.3px;top:306.29999999999995px" width="9" height="7" viewBox="0 0 9 7"><path d="M0.8 3.6 L3 5.7 L8 1" fill="none" stroke="#000" stroke-width="1.9" stroke-linejoin="miter"/></svg>
<div class="a" style="left:789px;top:323px;width:6px;height:1px;background:repeating-linear-gradient(90deg,#9a9a9a 0 1px,transparent 1px 2px)"></div>
<svg style="left:797.7px;top:318.7px" width="12" height="10" viewBox="0 0 12 10"><path d="M0.6 0.6 H8.8 L10.9 4.8 H2.9 Z" fill="#fff" stroke="#2f5fe6" stroke-width="1.1" stroke-linejoin="round"/><path d="M5.6 5 V8.6 M2.8 8.9 H8.4" stroke="#6b6b6b" stroke-width="1.2" fill="none"/></svg>
<div class="t" style="left:814.90px;top:318.98px;font-size:9px;color:#111;transform:scaleX(1.0362);">Tracker #79</div>
<svg style="left:969.3px;top:321.7px" width="9" height="7" viewBox="0 0 9 7"><path d="M0.8 3.6 L3 5.7 L8 1" fill="none" stroke="#000" stroke-width="1.9" stroke-linejoin="miter"/></svg>
<div class="a" style="left:983px;top:146px;width:15px;height:185.39999999999998px;background:#f0f0f0;"></div>
<div class="a" style="left:984px;top:161px;width:13px;height:6.400000000000006px;background:#c1c1c1;"></div>
<svg style="left:987px;top:150.5px" width="8" height="5" viewBox="0 0 8 5"><path d="M0.8 4.2 L4 1 L7.2 4.2" fill="none" stroke="#858585" stroke-width="1.4"/></svg>
<svg style="left:987px;top:322.9px" width="8" height="5" viewBox="0 0 8 5"><path d="M0.8 0.8 L4 4 L7.2 0.8" fill="none" stroke="#858585" stroke-width="1.4"/></svg>
<div class="a" style="left:759.5px;top:333.4px;width:240.5px;height:113.4px;background:#fff;border:2px solid #a0a0a0;border-bottom:1px solid #c9c9c9"></div>
<div class="a" style="left:759.5px;top:331.4px;width:240.5px;height:4.4px;background:#a0a0a0;"></div>
<div class="a" style="left:761.5px;top:335.8px;width:236.5px;height:15.4px;background:linear-gradient(180deg,#e2e2e2 0%,#eeeeee 35%,#efefef 60%,#e6e6e6 100%);"></div>
<svg style="left:767.8px;top:339.6px" width="8" height="9" viewBox="0 0 8 9"><path d="M0.6 0.8 L3.9 3.8 L7.2 0.8 M0.6 4.4 L3.9 7.4 L7.2 4.4" fill="none" stroke="#111" stroke-width="1.3"/></svg>
<div class="t" style="left:782.90px;top:338.26px;font-size:9.5px;color:#111;transform:scaleX(0.9781);">Orientations</div>
<div class="a" style="left:761.5px;top:351.2px;width:236.5px;height:29.8px;background:#e1e1e1;"></div>
<svg style="left:766px;top:357px" width="22" height="20" viewBox="766 357 22 20"><g fill="none" stroke="#2f5fe6" stroke-width="1.3" stroke-linejoin="round"><path d="M771.3 367.6 H783 L779.9 375.2 H767.4 Z"/><path d="M783 367.6 L785.7 373.4 H781.2"/></g><g stroke="#111" stroke-width="1.7" fill="none"><path d="M773.7 364.4 L768.6 359.6"/><path d="M778.7 364.4 L784 359.6"/></g><path d="M766.8 358 H771.8 L766.8 363 Z M785.9 358 H780.9 L785.9 363 Z" fill="#111"/></svg>
<div class="t" style="left:789.90px;top:363.17px;font-size:9.6px;color:#111;transform:scaleX(0.9560);">Orientations management</div>
<div class="a" style="left:905.2px;top:354px;width:1.6px;height:25px;background:#a9a9a9;"></div>
<div class="a" style="left:906.8px;top:354px;width:1px;height:25px;background:#f2f2f2;"></div>
<svg style="left:914px;top:357px" width="22" height="18" viewBox="0 0 22 18"><g fill="none" stroke-width="1.5"><rect x="8.6" y="0.9" width="11.6" height="8" stroke="#e8d81a"/><rect x="4.8" y="4.6" width="11.6" height="8" stroke="#f08cb4"/><rect x="0.9" y="8.6" width="11.6" height="8" stroke="#22b8d8"/></g></svg>
<svg style="left:943.7px;top:357.5px" width="18" height="18" viewBox="-9 -9 18 18"><defs><linearGradient id="hq" x1="0" y1="0" x2="1" y2="1"><stop offset="0" stop-color="#86b2e4"/><stop offset="1" stop-color="#4c80c0"/></linearGradient></defs><circle r="8.6" fill="url(#hq)"/><path d="M-7.4 4.4 A8.6 8.6 0 0 0 8.6 0 Z" fill="#3f70b2" opacity="0.45"/></svg>
<div class="t" style="left:949.20px;top:359.75px;font-size:14px;color:#fff;font-weight:bold;transform:scaleX(0.8185);">?</div>
<svg style="left:769.2px;top:384px" width="9" height="9" viewBox="0 0 9 9"><rect x="0.5" y="0.5" width="7.4" height="7.4" fill="#fff" stroke="#9b9b9b" stroke-width="1"/><path d="M2.2 4.2 H6.2" stroke="#333" stroke-width="1"/></svg>
<svg style="left:780px;top:382px" width="15" height="15" viewBox="780 382 15 15"><g fill="none" stroke="#2f5fe6" stroke-width="1.15" stroke-linejoin="round"><path d="M784.1 390.1 H791.9 L789.2 395.1 H780.8 Z"/><path d="M791.9 390.1 L793.9 393.6 H790.4"/></g><g stroke="#111" stroke-width="1.3" fill="none"><path d="M785.3 387 L782.2 384.2"/><path d="M789.2 387 L792 384.2"/></g><path d="M780.9 383 H784.3 L780.9 386.4 Z M793.3 383 H789.9 L793.3 386.4 Z" fill="#111"/></svg>
<div class="t" style="left:799.80px;top:384.47px;font-size:8.9px;color:#000;font-weight:bold;transform:scaleX(1.1540);">Orientations (2)</div>
<div class="a" style="left:788px;top:396px;width:1px;height:24px;background:repeating-linear-gradient(180deg,#9a9a9a 0 1px,transparent 1px 2px)"></div>
<div class="a" style="left:789px;top:404px;width:6px;height:1px;background:repeating-linear-gradient(90deg,#9a9a9a 0 1px,transparent 1px 2px)"></div>
<div class="a" style="left:789px;top:419px;width:6px;height:1px;background:repeating-linear-gradient(90deg,#9a9a9a 0 1px,transparent 1px 2px)"></div>
<div class="t" style="left:799.80px;top:399.98px;font-size:9px;color:#111;transform:scaleX(1.0810);">#1: Tracking, tilted axis, Tilt aver. 1.6°, Azi...</div>
<div class="t" style="left:799.80px;top:415.58px;font-size:9px;color:#111;transform:scaleX(1.0810);">#2: Tracking, tilted axis, Tilt aver. 1.2°, Azi...</div>
<div class="a" style="left:759.5px;top:445.8px;width:240.5px;height:110.4px;background:#fff;border:2px solid #a0a0a0;border-top:1px solid #c9c9c9"></div>
<div class="a" style="left:761.5px;top:446.8px;width:236.5px;height:15.6px;background:linear-gradient(180deg,#e2e2e2 0%,#eeeeee 35%,#efefef 60%,#e6e6e6 100%);"></div>
<svg style="left:768.4px;top:450.8px" width="8" height="9" viewBox="0 0 8 9"><path d="M0.6 0.8 L3.9 3.8 L7.2 0.8 M0.6 4.4 L3.9 7.4 L7.2 4.4" fill="none" stroke="#111" stroke-width="1.3"/></svg>
<div class="t" style="left:782.60px;top:449.86px;font-size:9.5px;color:#111;transform:scaleX(0.9455);">Groups and zones</div>
<div class="a" style="left:761.5px;top:462.4px;width:236.5px;height:30px;background:#e1e1e1;"></div>
<svg style="left:765.8px;top:470.4px" width="21" height="15" viewBox="0 0 20.4 14.4"><path d="M0.8 2.6 Q0.8 1 2.4 1 H6.6 L8.2 2.8 H14.4 Q15.6 2.8 15.6 4 V5 H4.4 L0.8 13 Z" fill="#e2c23c" stroke="#c2a21e" stroke-width="0.8"/><path d="M4.6 5.2 H19.4 L15.6 13.4 H0.8 Z" fill="#efe27c" stroke="#c8ac2c" stroke-width="0.8" stroke-linejoin="round"/></svg>
<div class="t" style="left:789.50px;top:474.26px;font-size:9.5px;color:#111;transform:scaleX(0.9664);">New group</div>
<div class="a" style="left:789.6px;top:483.8px;width:6.4px;height:1px;background:#111;"></div>
<div class="a" style="left:843.6px;top:465.4px;width:1.6px;height:25px;background:#a9a9a9;"></div>
<div class="a" style="left:845.2px;top:465.4px;width:1px;height:25px;background:#f2f2f2;"></div>
<svg style="left:854.3px;top:469px" width="18" height="18" viewBox="-9 -9 18 18"><defs><linearGradient id="hq" x1="0" y1="0" x2="1" y2="1"><stop offset="0" stop-color="#86b2e4"/><stop offset="1" stop-color="#4c80c0"/></linearGradient></defs><circle r="8.6" fill="url(#hq)"/><path d="M-7.4 4.4 A8.6 8.6 0 0 0 8.6 0 Z" fill="#3f70b2" opacity="0.45"/></svg>
<div class="t" style="left:859.80px;top:471.25px;font-size:14px;color:#fff;font-weight:bold;transform:scaleX(0.8185);">?</div>
<svg style="left:769.4px;top:495.6px" width="9" height="9" viewBox="0 0 9 9"><rect x="0.5" y="0.5" width="7.4" height="7.4" fill="#fff" stroke="#9b9b9b" stroke-width="1"/><path d="M2.2 4.2 H6.2" stroke="#333" stroke-width="1"/></svg>
<svg style="left:780.2px;top:494.6px" width="14.5" height="10.4" viewBox="0 0 20.4 14.4"><path d="M0.8 2.6 Q0.8 1 2.4 1 H6.6 L8.2 2.8 H14.4 Q15.6 2.8 15.6 4 V5 H4.4 L0.8 13 Z" fill="#e2c23c" stroke="#c2a21e" stroke-width="0.8"/><path d="M4.6 5.2 H19.4 L15.6 13.4 H0.8 Z" fill="#efe27c" stroke="#c8ac2c" stroke-width="0.8" stroke-linejoin="round"/></svg>
<div class="a" style="left:799px;top:493px;width:180.79999999999995px;height:14px;overflow:hidden"><div class="t" style="left:0.00px;top:2.87px;font-size:8.9px;color:#000;font-weight:bold;transform:scaleX(1.1737);">Lotto 1- Lay out 31-05-2024 PV syst Tracker</div>
</div>
<div class="a" style="left:773px;top:504.4px;width:1px;height:49.80000000000007px;background:repeating-linear-gradient(180deg,#9a9a9a 0 1px,transparent 1px 2px)"></div>
<div class="a" style="left:788px;top:508px;width:1px;height:46.200000000000045px;background:repeating-linear-gradient(180deg,#9a9a9a 0 1px,transparent 1px 2px)"></div>
<div class="a" style="left:789px;top:515px;width:6px;height:1px;background:repeating-linear-gradient(90deg,#9a9a9a 0 1px,transparent 1px 2px)"></div>
<svg style="left:797.7px;top:510.79999999999995px" width="12" height="10" viewBox="0 0 12 10"><path d="M0.6 0.6 H8.8 L10.9 4.8 H2.9 Z" fill="#fff" stroke="#2f5fe6" stroke-width="1.1" stroke-linejoin="round"/><path d="M5.6 5 V8.6 M2.8 8.9 H8.4" stroke="#6b6b6b" stroke-width="1.2" fill="none"/></svg>
<div class="t" style="left:814.50px;top:511.08px;font-size:9px;color:#111;transform:scaleX(1.0362);">Tracker #176</div>
<div class="a" style="left:789px;top:530px;width:6px;height:1px;background:repeating-linear-gradient(90deg,#9a9a9a 0 1px,transparent 1px 2px)"></div>
<svg style="left:797.7px;top:526.0999999999999px" width="12" height="10" viewBox="0 0 12 10"><path d="M0.6 0.6 H8.8 L10.9 4.8 H2.9 Z" fill="#fff" stroke="#2f5fe6" stroke-width="1.1" stroke-linejoin="round"/><path d="M5.6 5 V8.6 M2.8 8.9 H8.4" stroke="#6b6b6b" stroke-width="1.2" fill="none"/></svg>
<div class="t" style="left:814.50px;top:526.38px;font-size:9px;color:#111;transform:scaleX(1.0362);">Tracker #134</div>
<div class="a" style="left:789px;top:546px;width:6px;height:1px;background:repeating-linear-gradient(90deg,#9a9a9a 0 1px,transparent 1px 2px)"></div>
<svg style="left:797.7px;top:541.4px" width="12" height="10" viewBox="0 0 12 10"><path d="M0.6 0.6 H8.8 L10.9 4.8 H2.9 Z" fill="#fff" stroke="#2f5fe6" stroke-width="1.1" stroke-linejoin="round"/><path d="M5.6 5 V8.6 M2.8 8.9 H8.4" stroke="#6b6b6b" stroke-width="1.2" fill="none"/></svg>
<div class="t" style="left:814.50px;top:541.68px;font-size:9px;color:#111;transform:scaleX(1.0362);">Tracker #95</div>
<div class="a" style="left:983px;top:492.4px;width:15px;height:61.80000000000007px;background:#f0f0f0;"></div>
<div class="a" style="left:984px;top:506.8px;width:13px;height:6.800000000000011px;background:#c1c1c1;"></div>
<svg style="left:987px;top:496.9px" width="8" height="5" viewBox="0 0 8 5"><path d="M0.8 4.2 L4 1 L7.2 4.2" fill="none" stroke="#858585" stroke-width="1.4"/></svg>
<svg style="left:987px;top:545.7px" width="8" height="5" viewBox="0 0 8 5"><path d="M0.8 0.8 L4 4 L7.2 0.8" fill="none" stroke="#858585" stroke-width="1.4"/></svg>
<div class="a" style="left:759.5px;top:554.2px;width:240.5px;height:2px;background:#a0a0a0;"></div>
<div class="a" style="left:788.4px;top:562.4px;width:92.2px;height:30.2px;background:#dfdfdf;border:1px solid #a9a9a9;border-bottom-color:#8e8e8e;border-right-color:#9a9a9a;border-radius:1.5px"></div>
<div class="a" style="left:886.4px;top:562.4px;width:114px;height:30.2px;background:#dfdfdf;border:1px solid #a9a9a9;border-bottom-color:#8e8e8e;border-right:none;border-radius:1.5px 0 0 1.5px"></div>
<svg style="left:811.6px;top:570.6px" width="16" height="15" viewBox="0 0 16 15"><path d="M2 2.2 L14 13 M13.6 1.6 L2.4 13.4" stroke="#ea0f1a" stroke-width="4.1" stroke-linecap="butt"/></svg>
<div class="t" style="left:832.70px;top:573.96px;font-size:9.5px;color:#111;transform:scaleX(0.9232);">Cancel</div>
<svg style="left:907.6px;top:568.6px" width="21" height="18" viewBox="0 0 21 18"><path d="M1.6 10.6 L6.4 15 L19.2 1.8" fill="none" stroke="#6ab04c" stroke-width="3"/></svg>
<div class="t" style="left:931.40px;top:573.76px;font-size:9.5px;color:#111;transform:scaleX(0.9220);">Close scene</div>
<div class="a" style="left:0px;top:0px;width:1.8px;height:618px;background:linear-gradient(90deg,#6a9bd3,#3f74b8);"></div>
<div class="a" style="left:0px;top:616.6px;width:1000px;height:1.4px;background:#6f9bd2;"></div>
</div>
</body>
</html>
